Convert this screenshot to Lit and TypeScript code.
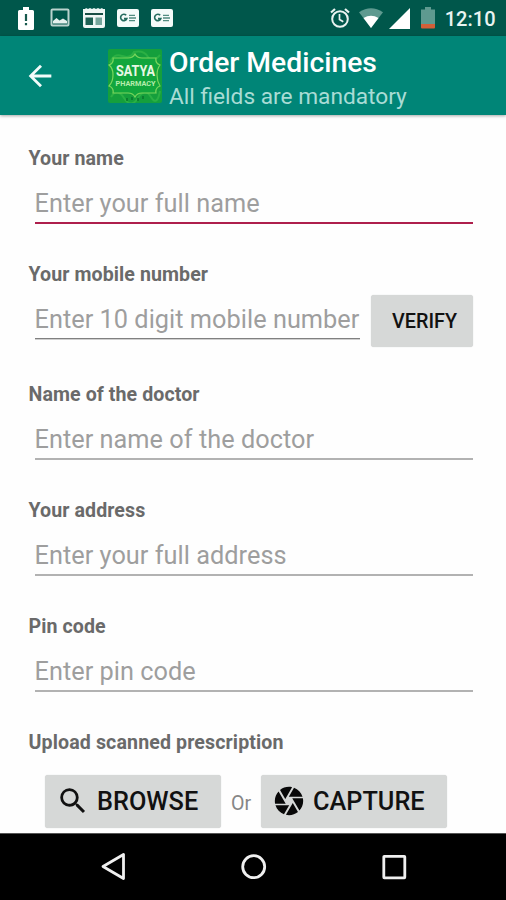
import { LitElement, html, css, svg, nothing } from "lit";
import { customElement, property } from "lit/decorators.js";

@customElement("form-field")
class FormField extends LitElement {
  @property() label = "";
  @property() hint = "";
  @property({ type: Boolean, reflect: true }) active = false;
  @property({ type: Boolean, reflect: true }) strong = false;
  @property() action = "";

  static styles = css`
    :host { display: block; height: 116px; }
    .label { height: 28px; line-height: 29px; font-size: 19.6px; font-weight: 700; color: #6a6a6a; letter-spacing: .08px; white-space: nowrap; }
    .row { display: flex; gap: 11px; height: 53px; padding: 0 0 0 6px; }
    .input { flex: 1; box-sizing: border-box; height: 52px; border-bottom: 2px solid #b2b2b2; font-size: 25.3px; line-height: 63px; letter-spacing: .03px; color: #9e9e9e; white-space: nowrap; }
    :host([active]) .label, :host([strong]) .label { line-height: 31px; }
    :host([active]) .input { height: 53px; border-bottom: 2px solid #ae1f4c; line-height: 65px; }
    :host([strong]) .input { border-bottom: 1px solid #808080; box-shadow: 0 1px #cfcfcf; line-height: 65px; }
    :host([strong]) { height: 121px; }
    .button { width: 102px; height: 52px; margin-top: 8px; box-sizing: border-box; padding-left: 5px; border-radius: 3px; background: #d6d8d7; box-shadow: 0 0 1px #c4c6c5; color: #111; font-size: 19.8px; font-weight: 500; line-height: 53px; text-align: center; }
  `;

  render() {
    return html`
      <div class="label">${this.label}</div>
      <div class="row">
        <div class="input">${this.hint}</div>
        ${this.action ? html`<div class="button">${this.action}</div>` : nothing}
      </div>
    `;
  }
}

const newsBadge = svg`
  <rect x="0" y="0" width="22" height="18" rx="2" fill="#f4fbf9"/>
  <path d="M9.2 6.3A3.2 3.2 0 1 0 9.8 9.6H7" fill="none" stroke="#246c5e" stroke-width="1.6"/>
  <path d="M12 6.4h6M12 9h7M12 11.6h6" stroke="#528c80" stroke-width="1.4"/>
`;

@customElement("app-root")
class AppRoot extends LitElement {
  static styles = css`
    :host { display: flex; flex-direction: column; width: 506px; height: 900px; overflow: hidden; background: #fefefe; font-family: Roboto, "Noto Sans", sans-serif; }
    svg { display: block; flex: none; }
    .status { height: 36px; flex: none; background: #00574b; display: flex; align-items: center; justify-content: space-between; padding: 0 10.5px 0 18px; }
    .group { display: flex; align-items: center; }
    .notices { gap: 12px; }
    .picture { margin: 0 1px 0 4px; }
    .wifi { margin-left: 9px; }
    .signal { margin-left: 6px; }
    .battery { margin-left: 10px; }
    .time { margin-left: 10px; font-size: 20px; font-weight: 500; line-height: 36px; padding-top: 2px; color: #e9f4f1; }
    .bar { height: 79px; flex: none; background: #008577; display: flex; align-items: center; box-shadow: 0 1px 3px rgba(0, 0, 0, .35); z-index: 1; }
    .back { margin-left: 23px; }
    .logo { margin: 0 7px 0 51px; }
    .titles { white-space: nowrap; padding-top: 5px; }
    .title { height: 37px; line-height: 37px; font-size: 28.3px; font-weight: 500; color: #fff; }
    .subtitle { height: 32px; line-height: 32px; font-size: 22.7px; color: #a9dcd5; }
    .form { flex: 1; min-height: 0; overflow: hidden; padding: 28px 33px 0 28.5px; }
    .upload { height: 28px; line-height: 30px; font-size: 19.6px; font-weight: 700; color: #6a6a6a; letter-spacing: .12px; }
    .choices { display: flex; align-items: center; margin: 19px 0 0 16.5px; }
    .choice { display: flex; align-items: center; box-sizing: border-box; height: 53px; border-radius: 3px; background: #d6d8d7; box-shadow: 0 0 1px #c4c6c5; color: #111; font-size: 25.3px; font-weight: 500; white-space: nowrap; }
    .choice svg { margin-top: -2px; }
    .browse { width: 176px; padding-left: 11px; gap: 7px; }
    .capture { width: 186px; padding-left: 11px; gap: 7px; }
    .or { width: 40px; text-align: center; color: #868686; font-size: 19.6px; padding-top: 3px; }
    .nav { height: 67px; flex: none; box-sizing: border-box; background: #000; border-top: 1px solid #555; }
  `;

  render() {
    return html`
      <div class="status">
        <div class="group notices">
          <svg width="16" height="23" viewBox="0 0 16 23">
            <path d="M5 0h6v3h3.500Q16 3 16 4.500V21.500Q16 23 14.500 23H1.500Q0 23 0 21.500V4.500Q0 3 1.500 3H5z" fill="#fff"/>
            <path d="M8 7v7M8 16v2.300" stroke="#17594e" stroke-width="2.200"/>
          </svg>
          <svg class="picture" width="20" height="20" viewBox="0 0 20 20">
            <rect x="1.500" y="1.500" width="17" height="16" rx="1" fill="none" stroke="#b9d3ce" stroke-width="2"/>
            <path d="M3 15.500V13l3.500-3 3 2.500 3.500-2 4 2.500v2.500z" fill="#e4f0ed"/>
          </svg>
          <svg width="22" height="20" viewBox="0 0 22 20">
            <path d="M0 1h2l1-1 2 1 2-1 2 1 2-1 2 1 2-1 2 1 2-1 1 1h2v17q0 2-2 2H2q-2 0-2-2z" fill="#eef7f5"/>
            <path d="M2 6h18" stroke="#174f45" stroke-width="2"/>
            <path d="M2.500 9.500H10v7.500H2.500z" fill="#1d6154"/>
            <path d="M12.500 9.500H19v7.500h-6.500z" fill="#75a69c"/>
          </svg>
          <svg width="22" height="18" viewBox="0 0 22 18">${newsBadge}</svg>
          <svg width="22" height="18" viewBox="0 0 22 18">${newsBadge}</svg>
        </div>
        <div class="group">
          <svg width="20" height="22" viewBox="0 0 20 22">
            <circle cx="10" cy="12" r="7.800" fill="none" stroke="#e9f4f1" stroke-width="2"/>
            <path d="M1 5.500l4-3.500M19 5.500l-4-3.500" stroke="#e9f4f1" stroke-width="2.200"/>
            <path d="M9.500 7v5.500l3.800 2.300" fill="none" stroke="#e9f4f1" stroke-width="1.700"/>
          </svg>
          <svg class="wifi" width="24" height="20" viewBox="0 0 24 20">
            <path d="M0 4.200Q12-3.800 24 4.200L12 20z" fill="#5e9a90"/>
            <path d="M4.500 10Q12 5.500 19.500 10L12 20z" fill="#fff"/>
          </svg>
          <svg class="signal" width="22" height="21" viewBox="0 0 22 21"><path d="M0 21L21 0v21z" fill="#fff"/></svg>
          <svg class="battery" width="14" height="22" viewBox="0 0 14 22">
            <path d="M4 0h6v2.500h4V17H0V2.500h4z" fill="#5e9a90"/>
            <path d="M0 17h14v3.500q0 1-1 1H1q-1 0-1-1z" fill="#d35f38"/>
          </svg>
          <div class="time">12:10</div>
        </div>
      </div>
      <div class="bar">
        <svg class="back" width="34" height="34" viewBox="0 0 24 24"><path d="M20 11H7.830l5.590-5.590L12 4l-8 8 8 8 1.410-1.410L7.830 13H20v-2z" fill="#f2fbfa"/></svg>
        <svg class="logo" width="54" height="54" viewBox="0 0 54 54">
          <rect width="54" height="54" rx="2" fill="#159f3c"/>
          <path d="M2 14Q5 4 14 7T26 3Q36 1 40 8T52 6M3 48Q9 38 16 49T30 49T43 48T52 42" fill="none" stroke="#2bb044" stroke-width="2"/>
          <path d="M5 9h15q5 0 7-4 2 4 7 4h14q-1 5 4 7-3 4-3 10t3 11q-5 2-4 7H34q-5 0-7 4-2-4-7-4H5q1-5-4-7 4-4 4-11T1 16q5-2 4-7z" fill="#12a63d" stroke="#7bd65c" stroke-width="1.200"/>
          <path d="M19 49v3M24 48v3M30 49v3M35 47v3" stroke="#08762d" stroke-width="1.500"/>
          <text x="27.500" y="26.800" text-anchor="middle" textLength="39" lengthAdjust="spacingAndGlyphs" font-family="Roboto, sans-serif" font-size="14" font-weight="700" fill="#e8f8e4">SATYA</text>
          <text x="27.500" y="36.800" text-anchor="middle" textLength="40" lengthAdjust="spacingAndGlyphs" font-family="Roboto, sans-serif" font-size="7" font-weight="700" fill="#b6ecac">PHARMACY</text>
        </svg>
        <div class="titles">
          <div class="title">Order Medicines</div>
          <div class="subtitle">All fields are mandatory</div>
        </div>
      </div>
      <div class="form">
        <form-field label="Your name" hint="Enter your full name" active></form-field>
        <form-field label="Your mobile number" hint="Enter 10 digit mobile number" action="VERIFY" strong></form-field>
        <form-field label="Name of the doctor" hint="Enter name of the doctor"></form-field>
        <form-field label="Your address" hint="Enter your full address"></form-field>
        <form-field label="Pin code" hint="Enter pin code"></form-field>
        <div class="upload">Upload scanned prescription</div>
        <div class="choices">
          <div class="choice browse">
            <svg width="34" height="34" viewBox="0 0 24 24"><path d="M15.500 14h-.79l-.28-.27A6.471 6.471 0 0 0 16 9.500 6.500 6.500 0 1 0 9.500 16c1.610 0 3.090-.59 4.230-1.570l.27.28v.79l5 4.990L20.490 19l-4.990-5zm-6 0C7.010 14 5 11.990 5 9.500S7.010 5 9.500 5 14 7.010 14 9.500 11.990 14 9.500 14z" fill="#111"/></svg>
            <span>BROWSE</span>
          </div>
          <div class="or">Or</div>
          <div class="choice capture">
            <svg width="34" height="34" viewBox="0 0 24 24"><path d="M9.400 10.500l4.770-8.260C13.470 2.090 12.750 2 12 2c-2.400 0-4.600.85-6.320 2.250l3.660 6.350.06-.1zM21.540 9c-.92-2.920-3.150-5.260-6-6.340L11.880 9h9.660zm.26 1h-7.490l.29.5 4.760 8.250C21 16.970 22 14.610 22 12c0-.69-.07-1.350-.2-2zM8.540 12l-3.900-6.750C3.010 7.030 2 9.390 2 12c0 .69.07 1.350.2 2h7.490l-1.150-2zm-6.080 3c.92 2.920 3.150 5.260 6 6.340L12.120 15H2.460zm11.270 0l-3.900 6.760c.7.15 1.420.24 2.170.24 2.400 0 4.600-.85 6.320-2.250l-3.660-6.350-.93 1.600z" fill="#080808"/></svg>
            <span>CAPTURE</span>
          </div>
        </div>
      </div>
      <div class="nav">
        <svg width="506" height="66" viewBox="0 834 506 66" fill="none" stroke="#f0f0f0" stroke-width="2.800">
          <path d="M103 866.500l20.500-12v24z" stroke-linejoin="round"/>
          <circle cx="253.700" cy="866.700" r="11"/>
          <rect x="383.800" y="856.300" width="21" height="21.500" rx=".5"/>
        </svg>
      </div>
    `;
  }
}
